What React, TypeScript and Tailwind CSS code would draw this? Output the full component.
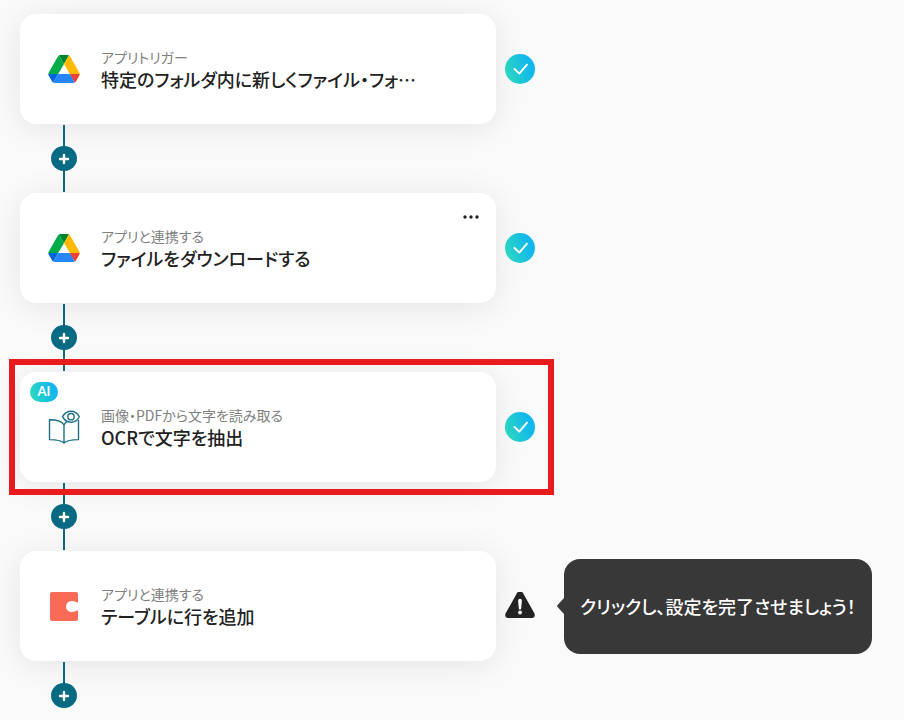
import type { ReactNode } from 'react'

type Status = 'done' | 'warning'

interface Step {
  id: string
  label: string
  title: string
  icon: ReactNode
  status: Status
  ai?: boolean
  menu?: boolean
  highlighted?: boolean
  hint?: string
}

function DriveIcon() {
  return (
    <svg viewBox="0 0 87.3 78" className="w-8 h-7" aria-hidden="true">
      <path d="m6.6 66.85 3.85 6.65c.8 1.4 1.95 2.5 3.3 3.3l13.75-23.8h-27.5c0 1.55.4 3.1 1.2 4.5z" fill="#0066da" />
      <path d="m43.65 25-13.75-23.8c-1.35.8-2.5 1.9-3.3 3.3l-25.4 44a9.06 9.06 0 0 0 -1.2 4.5h27.5z" fill="#00ac47" />
      <path d="m73.55 76.8c1.35-.8 2.5-1.9 3.3-3.3l1.6-2.75 7.65-13.25c.8-1.4 1.2-2.95 1.2-4.5h-27.502l5.852 11.5z" fill="#ea4335" />
      <path d="m43.65 25 13.75-23.8c-1.35-.8-2.9-1.2-4.5-1.2h-18.5c-1.6 0-3.15.45-4.5 1.2z" fill="#00832d" />
      <path d="m59.8 53h-32.3l-13.75 23.8c1.35.8 2.9 1.2 4.5 1.2h50.8c1.6 0 3.15-.45 4.5-1.2z" fill="#2684fc" />
      <path d="m73.4 26.5-12.7-22c-.8-1.4-1.95-2.5-3.3-3.3l-13.75 23.8 16.15 28h27.45c0-1.55-.4-3.1-1.2-4.5z" fill="#ffba00" />
    </svg>
  )
}

function OcrIcon() {
  return (
    <svg viewBox="0 0 32 34" className="w-8 h-[34px]" fill="none" stroke="#1f7288" strokeWidth="1.4" strokeLinejoin="round" aria-hidden="true">
      <path d="M16 15C14.3 11.3 9 9.8 1.5 9.8v19.8c6 0 11.5.6 14.5 3.4 3-2.800 8.500-3.400 14.500-3.400V10" />
      <path d="M16 33V15c.7-1.700 1.800-2.900 3.300-3.700" />
      <path d="M14.500 6.700C16.500 3.100 19.500 1.200 23 1.200s6.500 1.900 8.300 5.500c-1.800 3.600-4.800 5.500-8.300 5.500s-6.500-1.900-8.500-5.500z" />
      <circle cx="23" cy="6.700" r="3.200" />
    </svg>
  )
}

function CodaIcon() {
  return (
    <svg viewBox="0 0 28 29" className="w-7 h-[29px]" aria-hidden="true">
      <path d="M2 0h24a2 2 0 0 1 2 2v8.300c-1.300 1-2.200-1.300-6.500-1.300a5.500 5.500 0 0 0 0 11c4.300 0 5.200-2.300 6.500-1.300V27a2 2 0 0 1-2 2H2a2 2 0 0 1-2-2V2a2 2 0 0 1 2-2z" fill="#f76b57" />
    </svg>
  )
}

function StatusIcon({ status }: { status: Status }) {
  if (status === 'warning') {
    return (
      <svg viewBox="0 0 30 28" className="w-[30px] h-7 shrink-0" role="img" aria-label="未設定">
        <path d="M12.3 .6a3.100 3.100 0 0 1 5.400 0l11.500 20.500c1.300 2.400.3 4.900-2.400 4.900H3.200C.5 26-.5 23.500.8 21.100z" fill="#222" />
        <path d="M13.100 8.700a1.900 1.900 0 0 1 3.800 0l-.7 7.500a1.200 1.200 0 0 1-2.400 0z" fill="#fff" />
        <circle cx="15" cy="20.500" r="1.900" fill="#fff" />
      </svg>
    )
  }
  return (
    <span className="flex items-center justify-center w-[30px] h-[30px] rounded-full shrink-0 bg-linear-[70deg,#2fdcb8,#12b8ec_75%]">
      <svg viewBox="0 0 30 30" className="w-[30px] h-[30px]" fill="none" stroke="#fff" strokeWidth="1.9" strokeLinecap="round" strokeLinejoin="round" role="img" aria-label="設定済み">
        <path d="M9.500 15l4.800 4.600 7.700-9" />
      </svg>
    </span>
  )
}

function Connector({ last }: { last?: boolean }) {
  return (
    <div className="flex flex-col items-center w-[88px] h-[69px] pt-px">
      <div className="w-0.5 h-[21px] bg-[#086b83]" />
      <button type="button" aria-label="ステップを追加" className="flex items-center justify-center w-[26px] h-[25px] rounded-full bg-[#086b83]">
        <svg viewBox="0 0 12 12" className="w-3 h-3" stroke="#fff" strokeWidth="2.4" strokeLinecap="round" aria-hidden="true">
          <path d="M6 2v8M2 6h8" />
        </svg>
      </button>
      {!last && <div className="w-0.5 h-[21px] bg-[#086b83]" />}
    </div>
  )
}

function StepRow({ step }: { step: Step }) {
  return (
    <div className="relative flex items-center">
      <div className="relative flex items-center gap-[9px] flex-1 min-w-0 max-w-[476px] h-[110px] pl-6 pr-16 rounded-2xl bg-white shadow-[0_4px_32px_rgba(0,0,0,0.09)]">
        {step.ai && (
          <span className="absolute top-2.5 left-2.5 flex items-center justify-center w-7 h-5 rounded-full text-[13px] font-bold font-['Lato',sans-serif] text-white bg-linear-[70deg,#2fdcb8,#12b8ec_75%]">
            AI
          </span>
        )}
        <div className="flex items-center justify-center w-10 shrink-0">{step.icon}</div>
        <div className="flex-1 min-w-0 pl-2">
          <p className="text-sm leading-5 text-[#808080] truncate">{step.label}</p>
          <h2 className="text-lg leading-6 font-medium text-[#222] truncate">{step.title}</h2>
        </div>
        {step.menu && (
          <button type="button" aria-label="メニュー" className="absolute top-4 right-4 flex items-center justify-center w-[18px] h-4">
            <svg viewBox="0 0 18 4" className="w-[18px] h-1" fill="#222" aria-hidden="true">
              <circle cx="3" cy="2" r="1.7" />
              <circle cx="9" cy="2" r="1.7" />
              <circle cx="15" cy="2" r="1.7" />
            </svg>
          </button>
        )}
      </div>
      <div className="relative flex items-center pl-[9px]">
        <StatusIcon status={step.status} />
      </div>
      {step.hint && (
        <div role="status" className="flex items-center ml-[22px]">
          <svg viewBox="0 0 7 16" className="w-[7px] h-4 shrink-0" fill="#383838" aria-hidden="true">
            <path d="M7 0v16L.6 9a1.5 1.5 0 0 1 0-2z" />
          </svg>
          <p className="flex items-center h-[95px] px-4 rounded-2xl bg-[#383838] text-white text-lg leading-6 font-medium whitespace-nowrap">
            {step.hint}
          </p>
        </div>
      )}
      {step.highlighted && (
        <div className="pointer-events-none absolute z-10 -inset-y-[13px] -left-[11px] w-[545px] border-6 border-[#e81c1c]" />
      )}
    </div>
  )
}

const steps: Step[] = [
  {
    id: 'trigger',
    label: 'アプリトリガー',
    title: '特定のフォルダ内に新しくファイル・フォ…',
    icon: <DriveIcon />,
    status: 'done',
  },
  {
    id: 'download',
    label: 'アプリと連携する',
    title: 'ファイルをダウンロードする',
    icon: <DriveIcon />,
    status: 'done',
    menu: true,
  },
  {
    id: 'ocr',
    label: '画像・PDFから文字を読み取る',
    title: 'OCRで文字を抽出',
    icon: <OcrIcon />,
    status: 'done',
    ai: true,
    highlighted: true,
  },
  {
    id: 'add-row',
    label: 'アプリと連携する',
    title: 'テーブルに行を追加',
    icon: <CodaIcon />,
    status: 'warning',
    hint: 'クリックし、設定を完了させましょう！',
  },
]

export default function App() {
  return (
    <main
      lang="ja"
      className="min-h-screen overflow-hidden bg-[#fafafa] px-5 pt-3.5 font-['Noto_Sans_CJK_JP',sans-serif] [font-feature-settings:'palt']"
    >
      <ol>
        {steps.map((step, i) => (
          <li key={step.id}>
            <StepRow step={step} />
            <Connector last={i === steps.length - 1} />
          </li>
        ))}
      </ol>
    </main>
  )
}
